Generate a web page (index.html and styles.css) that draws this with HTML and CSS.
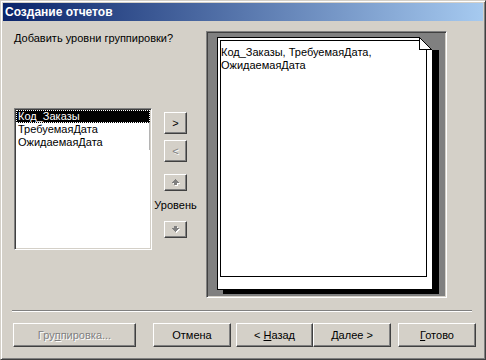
FILE: index.html
```html
<!DOCTYPE html>
<html lang="ru">
<head>
  <meta charset="UTF-8">
  <title>Создание отчетов</title>
  <link rel="stylesheet" href="styles.css">
</head>
<body>
  <div class="window">
    <div class="titlebar">Создание отчетов</div>
    <div class="client">
      <div class="main">
        <div class="left">
          <p class="question">Добавить уровни группировки?</p>
          <div class="picker">
            <ul class="listbox">
              <li class="selected">Код_Заказы</li>
              <li>ТребуемаяДата</li>
              <li>ОжидаемаяДата</li>
            </ul>
            <div class="movers">
              <button class="btn mover">&gt;</button>
              <button class="btn mover" disabled>&lt;</button>
              <button class="btn level">
                <svg width="8" height="7" viewBox="0 0 8 7" shape-rendering="crispEdges">
                  <path fill="#fff" transform="translate(1 1)" d="M3 0h1v1H3z M2 1h3v1H2z M1 2h5v1H1z M0 3h7v1H0z M2 4h3v2H2z"/>
                  <path fill="#808080" d="M3 0h1v1H3z M2 1h3v1H2z M1 2h5v1H1z M0 3h7v1H0z M2 4h3v2H2z"/>
                </svg>
              </button>
              <span class="level-label">Уровень</span>
              <button class="btn level down">
                <svg width="8" height="7" viewBox="0 0 8 7" shape-rendering="crispEdges">
                  <path fill="#fff" transform="translate(1 1)" d="M2 0h3v2H2z M0 2h7v1H0z M1 3h5v1H1z M2 4h3v1H2z M3 5h1v1H3z"/>
                  <path fill="#808080" d="M2 0h3v2H2z M0 2h7v1H0z M1 3h5v1H1z M2 4h3v1H2z M3 5h1v1H3z"/>
                </svg>
              </button>
            </div>
          </div>
        </div>
        <div class="preview">
          <div class="page">
            <div class="page-inner">Код_Заказы, ТребуемаяДата, ОжидаемаяДата</div>
            <svg class="dogear" width="20" height="15" viewBox="0 0 20 15" shape-rendering="crispEdges">
              <polygon points="0,0 20,0 20,13 13,13" fill="#808080"/>
              <polygon points="0.5,0.5 0.5,12.5 12.5,12.5" fill="#fff" stroke="#000"/>
            </svg>
          </div>
        </div>
      </div>
      <div class="separator"></div>
      <div class="buttons">
        <button class="btn wide" disabled>Гру<u>п</u>пировка...</button>
        <button class="btn cancel">Отмена</button>
        <button class="btn back">&lt; <u>Н</u>азад</button>
        <button class="btn next"><u>Д</u>алее &gt;</button>
        <button class="btn finish"><u>Г</u>отово</button>
      </div>
    </div>
  </div>
</body>
</html>
```
FILE: styles.css
```css
body { margin: 0; background: #d4d0c8; font-family: "Liberation Sans", Arial, sans-serif; font-size: 11px; color: #000; }
.window { width: 486px; height: 360px; box-sizing: border-box; padding: 2px; border: 1px solid; border-color: #d4d0c8 #404040 #404040 #d4d0c8; box-shadow: inset 1px 1px #fff, inset -1px -1px #808080; background: #d4d0c8; }
.titlebar { height: 18px; line-height: 18px; padding-left: 2px; font-size: 12px; font-weight: bold; color: #fff; background: linear-gradient(to right, #0a246a, #a6caf0); white-space: nowrap; }

.main { display: flex; height: 277px; }
.left { width: 203px; padding-left: 11px; box-sizing: border-box; }
.question { margin: 11px 0 0; line-height: 13px; white-space: nowrap; }
.picker { display: flex; margin-top: 63px; }

.listbox { position: relative; width: 138px; height: 142px; box-sizing: border-box; margin: 0; padding: 1px; list-style: none; background: #fff; border: 1px solid; border-color: #808080 #fff #fff #808080; box-shadow: inset 1px 1px #404040, inset -1px -1px #d4d0c8; }
.listbox::after { content: ""; position: absolute; right: 1px; top: 13px; width: 1px; height: 28px; background: #b4b4b4; }
.listbox li { height: 13px; line-height: 13px; padding-left: 2px; white-space: nowrap; }
.listbox li.selected { background: #000; color: #fff; outline: 1px dotted #fff; outline-offset: -1px; }

.movers { display: flex; flex-direction: column; align-items: center; width: 23px; margin-left: 12px; }
.btn { font: inherit; color: #000; background: #d4d0c8; margin: 0; padding: 0; border: 1px solid; border-color: #fff #404040 #404040 #fff; box-shadow: inset -1px -1px #808080; white-space: nowrap; }
.btn:disabled { color: #808080; text-shadow: 1px 1px 0 #fff; }
.mover { width: 23px; height: 22px; margin-top: 4px; }
.mover + .mover { margin-top: 6px; }
.level { width: 23px; height: 17px; margin-top: 12px; display: flex; align-items: center; justify-content: center; }
.level svg { display: block; }
.level-label { margin-top: 8px; line-height: 13px; white-space: nowrap; }
.level.down { margin-top: 9px; }

.preview { width: 241px; height: 267px; margin-top: 10px; box-sizing: border-box; padding: 5px 0 0 10px; background: #808080; border: 1px solid; border-color: #808080 #fff #fff #808080; box-shadow: inset 1px 1px #404040, inset -1px -1px #d4d0c8; }
.page { position: relative; width: 216px; height: 253px; box-sizing: border-box; padding: 2px 5px 12px 2px; background: #fff; border: 1px solid #000; box-shadow: 6px 4px 0 #000; }
.page-inner { height: 100%; box-sizing: border-box; padding-top: 5px; border: 1px solid #000; line-height: 13px; }
.dogear { position: absolute; top: -1px; left: 201px; display: block; }

.separator { width: 460px; margin: 12px 0 0 9px; border-top: 1px solid #808080; border-bottom: 1px solid #fff; }
.buttons { display: flex; margin-top: 11px; padding-left: 10px; }
.buttons .btn { height: 24px; width: 78px; }
.buttons .wide { width: 123px; }
.buttons .cancel { margin-left: 17px; }
.buttons .back { margin-left: 5px; width: 77px; }
.buttons .finish { margin-left: 7px; }
```
